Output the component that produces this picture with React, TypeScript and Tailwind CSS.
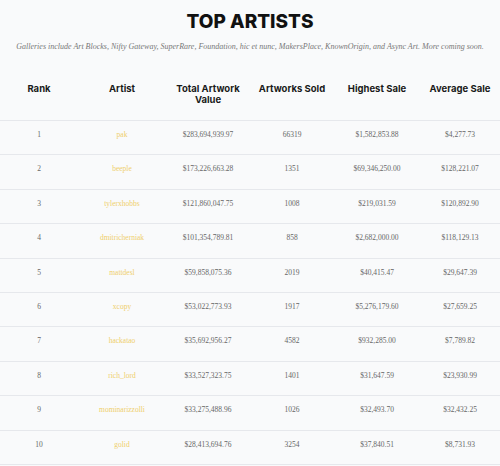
import React from "react";

const artists = [
  { rank: 1, name: "pak", total: "$283,694,939.97", sold: "66319", highest: "$1,582,853.88", average: "$4,277.73" },
  { rank: 2, name: "beeple", total: "$173,226,663.28", sold: "1351", highest: "$69,346,250.00", average: "$128,221.07" },
  { rank: 3, name: "tylerxhobbs", total: "$121,860,047.75", sold: "1008", highest: "$219,031.59", average: "$120,892.90" },
  { rank: 4, name: "dmitricherniak", total: "$101,354,789.81", sold: "858", highest: "$2,682,000.00", average: "$118,129.13" },
  { rank: 5, name: "mattdesl", total: "$59,858,075.36", sold: "2019", highest: "$40,415.47", average: "$29,647.39" },
  { rank: 6, name: "xcopy", total: "$53,022,773.93", sold: "1917", highest: "$5,276,179.60", average: "$27,659.25" },
  { rank: 7, name: "hackatao", total: "$35,692,956.27", sold: "4582", highest: "$932,285.00", average: "$7,789.82" },
  { rank: 8, name: "rich_lord", total: "$33,527,323.75", sold: "1401", highest: "$31,647.59", average: "$23,930.99" },
  { rank: 9, name: "mominarizzolli", total: "$33,275,488.96", sold: "1026", highest: "$32,493.70", average: "$32,432.25" },
  { rank: 10, name: "golid", total: "$28,413,694.76", sold: "3254", highest: "$37,840.51", average: "$8,731.93" },
];

const cols = "grid grid-cols-[78px_88px_84px_84px_86px_80px]";

export default function App() {
  return (
    <div className="w-[500px] h-[466px] overflow-hidden bg-[#f9fafb] font-['Inter',sans-serif]">
      {/* Title */}
      <div className="pt-[10px] text-center">
        <h1 className="text-[19px] leading-[24px] font-extrabold text-[#111]">TOP ARTISTS</h1>
        <p className="mt-[8px] text-[8px] leading-[10px] italic text-[#777] font-['Liberation_Serif',serif]">
          Galleries include Art Blocks, Nifty Gateway, SuperRare, Foundation, hic et nunc, MakersPlace, KnownOrigin, and Async Art. More coming soon.
        </p>
      </div>

      {/* Header */}
      <div className={`${cols} mt-[31px] h-[38px] border-b border-[#e6e8ec] text-center text-[9.5px] leading-[11px] font-bold text-[#1a1a1a]`}>
        <div>Rank</div>
        <div>Artist</div>
        <div>Total Artwork<br />Value</div>
        <div>Artworks Sold</div>
        <div>Highest Sale</div>
        <div>Average Sale</div>
      </div>

      {/* Rows */}
      {artists.map((a) => (
        <div
          key={a.rank}
          className={`${cols} h-[34.4px] pt-[9px] border-b border-[#e6e8ec] text-center text-[7.5px] leading-[9px] text-[#666] font-['Liberation_Serif',serif]`}
        >
          <div>{a.rank}</div>
          <div className="text-[#efcf6c]">{a.name}</div>
          <div>{a.total}</div>
          <div>{a.sold}</div>
          <div>{a.highest}</div>
          <div>{a.average}</div>
        </div>
      ))}
    </div>
  );
}
